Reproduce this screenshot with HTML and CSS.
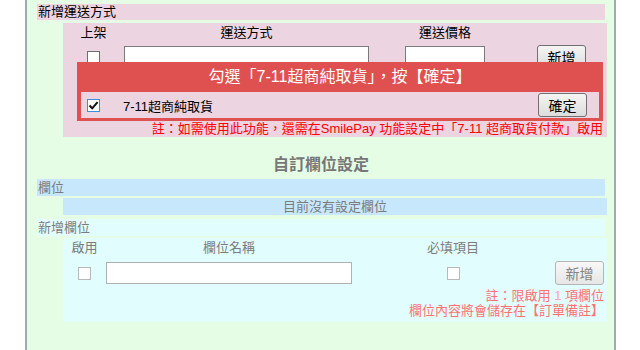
FILE: index.html
```html
<!DOCTYPE html>
<html lang="zh-Hant">
<head>
    <meta charset="UTF-8">
    <meta name="viewport" content="width=device-width, initial-scale=1.0">
    <title>運送方式設定</title>
    <link rel="stylesheet" href="styles.css">
</head>
<body>
    <div class="panel">
        <!-- 運送方式 -->
        <div class="bar bar-pink">新增運送方式</div>
        <div class="ship-box">
            <div class="ship-grid ship-head">
                <span class="cell-center">上架</span>
                <span class="head-name">運送方式</span>
                <span class="head-price">運送價格</span>
                <span></span>
            </div>
            <div class="ship-grid ship-row">
                <span class="cell-center"><span class="chk"></span></span>
                <span><input type="text" class="txt txt-name"></span>
                <span><input type="text" class="txt txt-price"></span>
                <span><button class="btn">新增</button></span>
            </div>
            <!-- 已存在的運送方式 (被提示框蓋住) -->
            <div class="ship-grid ship-row ship-saved">
                <span class="cell-center"><span class="chk"></span></span>
                <span><input type="text" class="txt txt-name"></span>
                <span><input type="text" class="txt txt-price"></span>
                <span></span>
            </div>
            <p class="note-red">註：如需使用此功能，還需在SmilePay 功能設定中「7-11 超商取貨付款」啟用</p>

            <!-- 提示框 -->
            <div class="hint">
                <div class="hint-title">勾選「7-11超商純取貨」，按【確定】</div>
                <div class="hint-row">
                    <span class="chk chk-on">
                        <svg width="11" height="11" viewBox="0 0 11 11"><path d="M1.5 5.5 L4.2 8.3 L9.6 2.2" fill="none" stroke="#111" stroke-width="2"/></svg>
                    </span>
                    <span class="hint-label">7-11超商純取貨</span>
                    <button class="btn">確定</button>
                </div>
            </div>
        </div>

        <!-- 自訂欄位 -->
        <h2 class="section-title">自訂欄位設定</h2>
        <div class="bar bar-blue">欄位</div>
        <div class="empty-row">目前沒有設定欄位</div>
        <div class="bar bar-cyan">新增欄位</div>
        <div class="field-box">
            <div class="field-grid field-head">
                <span class="cell-center">啟用</span>
                <span class="head-field">欄位名稱</span>
                <span class="cell-center">必填項目</span>
                <span></span>
            </div>
            <div class="field-grid field-row">
                <span class="cell-center"><span class="chk chk-light"></span></span>
                <span><input type="text" class="txt txt-field"></span>
                <span class="cell-center"><span class="chk chk-light"></span></span>
                <span class="cell-end"><button class="btn btn-light">新增</button></span>
            </div>
            <p class="note-pink">註：限啟用 <span class="num">1</span> 項欄位<br>欄位內容將會儲存在【訂單備註】</p>
        </div>
    </div>
</body>
</html>
```

FILE: styles.css
```css
/* General */
* {
    margin: 0;
    padding: 0;
    box-sizing: border-box;
}

body {
    font-family: "Liberation Sans", "Noto Sans CJK TC", sans-serif;
    font-size: 13px;
    background: #fff;
    color: #000;
}

.panel {
    margin-left: 25px;
    width: 591px;
    min-height: 350px;
    padding: 4px 9px 0 10px;
    background-color: #e5fde4;
    border-left: 2px solid #a2a9b2;
    border-right: 2px solid #a2a9b2;
}

.bar {
    height: 17px;
    line-height: 17px;
    padding-left: 1px;
}

.bar-pink {
    height: 16px;
    line-height: 16px;
    background-color: #ecd4e0;
}

.bar-blue {
    background-color: #c6e7fc;
    color: #7c7c7c;
}

.bar-cyan {
    margin-top: 4px;
    background-color: #e2fdfe;
    color: #7c7c7c;
}

.cell-center {
    display: flex;
    justify-content: center;
    align-items: center;
}

.cell-end {
    display: flex;
    justify-content: flex-end;
}

/* 運送方式 */
.ship-box {
    position: relative;
    margin: 3px -2px 0 26px;
    padding-top: 2px;
    background-color: #ecd4e0;
}

.ship-grid {
    display: grid;
    grid-template-columns: 61px 281px 132px 49px;
    align-items: center;
}

.ship-head {
    line-height: 16px;
}

.head-name {
    width: 245px;
    text-align: center;
}

.head-price {
    width: 80px;
    text-align: center;
}

.ship-row {
    margin-top: 4px;
    height: 24px;
}

.ship-saved {
    margin: 14px 0;
}

.txt {
    display: block;
    height: 22px;
    border: 1px solid #7a7a7a;
    background: #fff;
    font-family: inherit;
    font-size: 13px;
    padding: 0 3px;
    outline: none;
}

.txt-name {
    width: 245px;
}

.txt-price {
    width: 80px;
}

.btn {
    display: block;
    width: 49px;
    height: 24px;
    font-family: inherit;
    font-size: 14px;
    color: #000;
    border: 1px solid #707070;
    border-radius: 3px;
    background: linear-gradient(#f5f5f5, #dcdcdc);
    cursor: pointer;
}

.chk {
    display: inline-flex;
    justify-content: center;
    align-items: center;
    width: 13px;
    height: 13px;
    background: #fff;
    border: 1px solid #6e6e6e;
}

.chk-on {
    border-color: #3a8fd6;
}

.chk-light {
    border-color: #b8b8b8;
}

.note-red {
    line-height: 16px;
    padding-right: 4px;
    text-align: right;
    color: #ff0000;
}

/* 提示框 */
.hint {
    position: absolute;
    left: 14px;
    right: 4px;
    top: 39px;
    height: 59px;
    padding: 0 4px 3px;
    background-color: #df5151;
}

.hint-title {
    height: 30px;
    line-height: 30px;
    font-size: 16px;
    color: #fff;
    text-align: center;
}

.hint-row {
    display: flex;
    align-items: center;
    height: 26px;
    padding: 0 12px 0 6px;
    background-color: #ecd4e0;
}

.hint-label {
    margin-left: 23px;
}

.hint-row .btn {
    margin-left: auto;
}

/* 自訂欄位 */
.section-title {
    margin: 18px 0 4px;
    line-height: 20px;
    font-size: 16px;
    font-weight: bold;
    color: #777;
    text-align: center;
}

.empty-row {
    margin: 2px -2px 0 26px;
    height: 17px;
    line-height: 17px;
    text-align: center;
    color: #7c7c7c;
    background-color: #c6e7fc;
}

.field-box {
    margin: 2px -2px 0 26px;
    padding: 2px 3px 4px 0;
    background-color: #e2fdfe;
    color: #7c7c7c;
}

.field-grid {
    display: grid;
    grid-template-columns: 43px 300px 94px 1fr;
    align-items: center;
}

.field-head {
    line-height: 16px;
}

.head-field {
    width: 246px;
    text-align: center;
}

.field-row {
    margin-top: 5px;
    height: 24px;
}

.txt-field {
    width: 246px;
    border-color: #b0b0b0;
}

.btn-light {
    color: #858585;
    border-color: #b5b5b5;
    background: linear-gradient(#f8f8f8, #e6e6e6);
}

.note-pink {
    margin-top: 3px;
    line-height: 15px;
    text-align: right;
    color: #ff7272;
}

.note-pink .num {
    color: #ff9fc4;
}
```
